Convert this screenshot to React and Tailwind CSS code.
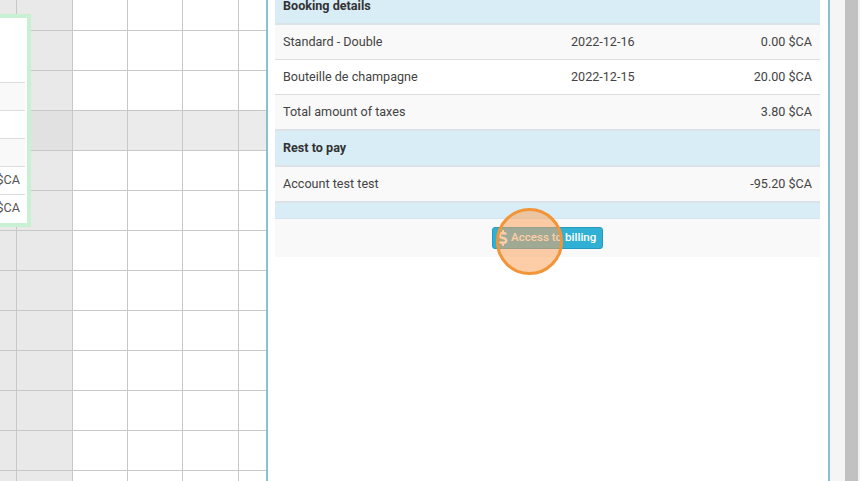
import React from "react";
import { FaDollarSign } from "react-icons/fa";

const rowHeights = [30, 40, 40, 40, 40, 40, 40, 40, 40, 40, 40, 40, 40];
const colWidths = ["w-[17px]", "w-[56px]", "w-[55px]", "w-[55px]", "w-[56px]", "flex-1"];

function CalendarGrid() {
    return (
        <div className="w-[266px] shrink-0 flex flex-col">
            {rowHeights.map((h, r) => (
                <div key={r} className={`flex shrink-0 ${h === 30 ? "h-[31px]" : "h-[40px]"} ${r === 3 ? "bg-[#ebebeb]" : ""}`}>
                    {colWidths.map((w, c) => (
                        <div
                            key={c}
                            className={`${w} border-b border-[#c8c8c8] ${c < 5 ? "border-r" : ""} ${c < 2 ? (r === 3 ? "bg-[#e1e1e1]" : "bg-[#e9e9e9]") : ""}`}
                        />
                    ))}
                </div>
            ))}
        </div>
    );
}

function PopupRow({ tinted, children }) {
    return (
        <div className={`h-[28px] mr-[2px] flex items-center justify-end border-t border-[#dddddd] pb-px pr-[5px] text-[12.6px] text-[#555555] ${tinted ? "bg-[#f9f9f9]" : "bg-white"}`}>
            {children}
        </div>
    );
}

function DetailRow({ label, date, amount, tinted }) {
    return (
        <div className={`h-[35px] grid grid-cols-[288px_1fr_auto] items-center border-b border-[#dddddd] px-2 text-[12.6px] text-[#444444] ${tinted ? "bg-[#f9f9f9]" : "bg-white"}`}>
            <div>{label}</div>
            <div>{date}</div>
            <div>{amount}</div>
        </div>
    );
}

export default function App() {
    return (
        <div className="relative flex h-[481px] w-[860px] overflow-hidden bg-white font-['Roboto',sans-serif]">
            <CalendarGrid />

            {/* green booking card, cut off by the left edge */}
            <div className="absolute left-0 top-[14px] h-[213px] w-[31px] border-y-4 border-r-4 border-[#c8f0d2] bg-white pb-px flex flex-col justify-end">
                <PopupRow tinted />
                <PopupRow />
                <PopupRow tinted />
                <PopupRow>$CA</PopupRow>
                <PopupRow>$CA</PopupRow>
            </div>

            {/* side panel */}
            <div className="w-[564px] shrink-0 border-x-2 border-[#8cc0cf] pl-[7px] pr-[8px] bg-white">
                <div className="h-[25px] flex items-end pb-[10px] border-b-2 border-[#dbe3e7] bg-[#d9edf7] px-2 text-[12.6px] leading-none font-bold text-[#333333]">
                    Booking details
                </div>
                <DetailRow tinted label="Standard - Double" date="2022-12-16" amount="0.00 $CA" />
                <DetailRow label="Bouteille de champagne" date="2022-12-15" amount="20.00 $CA" />
                <DetailRow tinted label="Total amount of taxes" amount="3.80 $CA" />
                <div className="h-[38px] flex items-center border-y-2 border-[#dbe3e7] -mt-px bg-[#d9edf7] px-2 text-[12.6px] font-bold text-[#333333]">
                    Rest to pay
                </div>
                <DetailRow tinted label="Account test test" amount="-95.20 $CA" />
                <div className="h-[18px] -mt-px border-t-2 border-b border-t-[#dbe3e7] border-b-[#d5e5ee] bg-[#d9edf7]" />
                <div className="h-[38px] flex items-center justify-center bg-[#f9f9f9]">
                    <button className="flex h-[22px] w-[111px] items-center justify-start rounded-[3px] border border-[#269abc] bg-[#31b0d5] pl-[2px] text-[11.6px] font-medium text-white">
                        <FaDollarSign className="text-[16px]" />
                        Access to billing
                    </button>
                </div>
            </div>

            <div className="flex-1 flex">
                <div className="w-[15px] bg-[#f5f5f5]" />
                <div className="w-[13px] bg-[#c1c1c1]" />
                <div className="flex-1 bg-[#f1f1f1]" />
            </div>

            {/* click marker over the button */}
            <div className="absolute left-[496px] top-[208px] h-[67px] w-[67px] rounded-full border-[3px] border-[#f29438] bg-[#f9a45c]/55" />
        </div>
    );
}
